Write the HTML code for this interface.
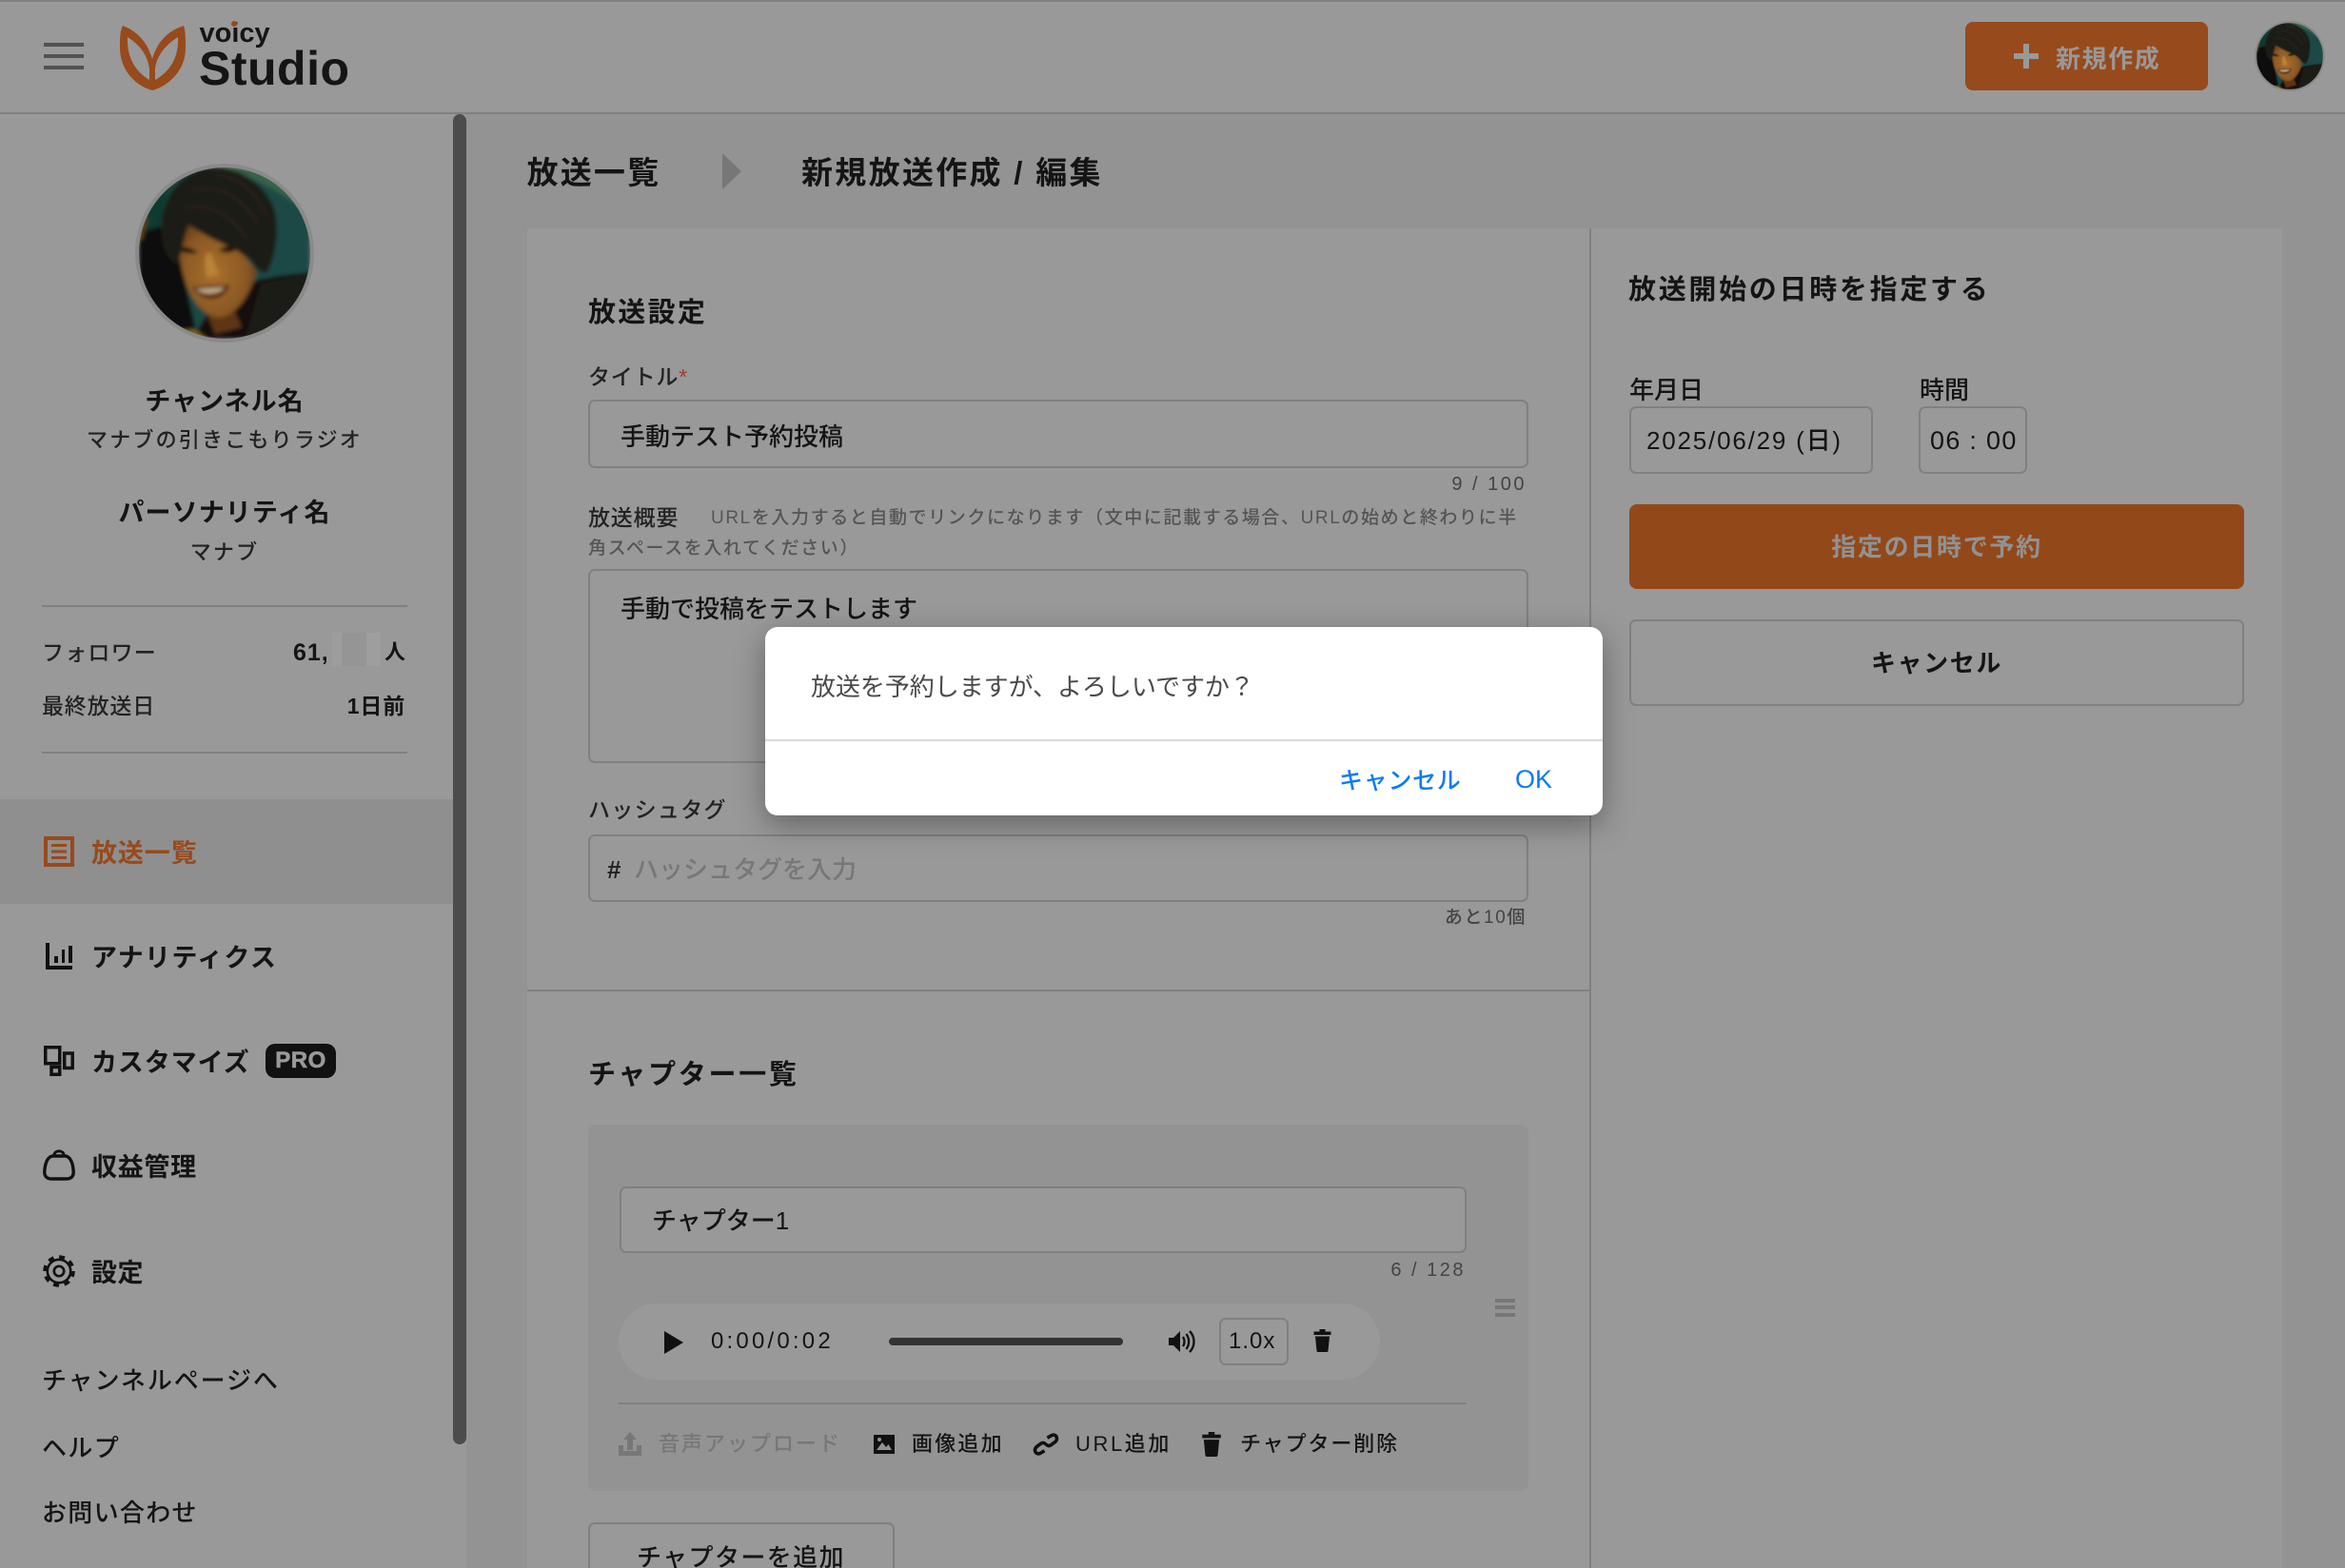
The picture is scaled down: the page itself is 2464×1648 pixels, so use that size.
<!DOCTYPE html>
<html lang="ja"><head><meta charset="utf-8"><title>voicy Studio</title>
<style>
html,body{margin:0;padding:0;width:2464px;height:1648px;overflow:hidden}
#p{position:relative;width:2464px;height:1648px;overflow:hidden;background:#939393;color:#141414;font-family:"Liberation Sans","Noto Sans CJK JP",sans-serif}
.a{position:absolute}
.t{position:absolute;white-space:nowrap;line-height:40px;height:40px;margin-top:3.500px;font-weight:500}
.b{font-weight:700}
.r{text-align:right}
.c{text-align:center}
.box{position:absolute;box-sizing:border-box;border:2px solid #808080;border-radius:7px;background:#999}
svg{position:absolute;overflow:visible}
</style></head><body><div id="p">
<svg width="0" height="0" style="position:absolute"><defs>
<filter id="bl" x="-10%" y="-10%" width="120%" height="120%"><feGaussianBlur stdDeviation="2.200"/></filter>
<radialGradient id="sk" cx="0.45" cy="0.55" r="0.6"><stop offset="0" stop-color="#a8702c"/><stop offset="0.7" stop-color="#8a5824"/><stop offset="1" stop-color="#5e3a16"/></radialGradient>
<clipPath id="cp"><circle cx="90" cy="90" r="90"/></clipPath>
<symbol id="av" viewBox="0 0 180 180"><g clip-path="url(#cp)"><g filter="url(#bl)">
<rect width="180" height="180" fill="#1a4a44"/>
<path d="M70 0H180V48L140 22L110 8Z" fill="#38634a"/>
<path d="M0 0H40L26 40L22 66H0Z" fill="#103a33"/>
<path d="M0 68L24 62L44 100L62 180H0Z" fill="#0b0b08"/>
<path d="M0 50L9 52L4 76H0Z" fill="#5f3c18"/>
<path d="M56 180L74 150L125 118L146 114L180 110V180Z" fill="#12110d"/>
<path d="M128 122L178 112V150L140 180H112Z" fill="#1b1a14"/>
<path d="M40 172L58 170L72 180H46Z" fill="#7d6322"/>
<path d="M70 150C78 158 92 160 100 150L108 168L80 175Z" fill="#5f3615"/>
<path d="M42 78C42 110 55 155 85 158C105 155 118 130 124 110L100 78L52 55Z" fill="url(#sk)"/>
<path d="M69 97C72 86 77 88 79 100L84 113L71 115Z" fill="#b98437"/>
<path d="M56 126C66 125 84 122 95 124C90 140 68 144 56 126Z" fill="#54200f"/>
<path d="M60 128C68 127 82 126 90 126C85 134 68 135 60 128Z" fill="#bda985"/>
<path d="M41 86C46 82 56 84 62 90C54 91 46 90 41 86ZM84 87C90 82 98 82 104 85C98 90 90 91 84 87Z" fill="#150e08"/>
<path d="M24 74C20 40 36 6 74 0C100 -2 128 12 141 40C148 58 146 88 135 110C128 112 122 105 118 98C106 90 100 84 92 82C78 76 64 68 52 60C49 68 45 88 41 102C32 98 26 88 24 74Z" fill="#1f1a15"/>
<path d="M55 25C80 15 108 30 124 58M46 44C70 35 98 50 114 76M80 8C102 8 122 24 134 50" fill="none" stroke="#2b241c" stroke-width="3"/>
</g></g></symbol>
<symbol id="trash" viewBox="0 0 20 24"><path d="M7 0H13V2.500H19V6H1V2.500H7Z M2.500 7.500H17.500L16 23A1.500 1.500 0 0 1 14.500 24H5.500A1.500 1.500 0 0 1 4 23Z" fill="#111"/></symbol>
</defs></svg>

<!-- header -->
<div class="a" style="left:0;top:0;width:2464px;height:120px;background:#999"></div>
<div class="a" style="left:0;top:0;width:2464px;height:2px;background:#808080"></div>
<div class="a" style="left:0;top:118px;width:2464px;height:2px;background:#808080"></div>
<div class="a" style="left:46px;top:45px;width:42px;height:4px;background:#525252"></div>
<div class="a" style="left:46px;top:57px;width:42px;height:4px;background:#525252"></div>
<div class="a" style="left:46px;top:69px;width:42px;height:4px;background:#525252"></div>
<svg style="left:0;top:0" width="400" height="118">
<path fill="#974a1c" fill-rule="evenodd" d="M160 95C145 91 126 76 126 50C126 40 126 33 129 27C145 33 155 45 160 62C165 45 175 33 193 27C195 33 195 40 195 50C195 76 175 91 160 95ZM134 39C133 60 142 75 157 84V72C155 58 147 47 134 39ZM187 39C188 60 179 75 163 84V72C165 58 174 47 187 39Z"/>
<text x="209.500" y="44" font-family="Liberation Sans" font-weight="700" font-size="29" fill="#151515">voicy</text>
<text x="209" y="89" font-family="Liberation Sans" font-weight="700" font-size="50" letter-spacing="0.500" fill="#151515">Studio</text>
<circle cx="246" cy="25" r="3" fill="#974a1c"/>
</svg>
<div class="a" style="left:2065px;top:23px;width:255px;height:72px;background:#974a1c;border-radius:8px"></div>
<div class="a" style="left:2116px;top:56px;width:26px;height:6px;background:#999"></div>
<div class="a" style="left:2126px;top:46px;width:6px;height:26px;background:#999"></div>
<div class="t b" style="left:2160px;top:38px;font-size:26px;letter-spacing:1.600px;color:#999">新規作成</div>
<div class="a" style="left:2369px;top:22px;width:74px;height:74px;border-radius:50%;background:#8a8a8a"></div>
<svg style="left:2371px;top:24px" width="70" height="70"><use href="#av" width="70" height="70"/></svg>

<!-- sidebar -->
<div class="a" style="left:0;top:120px;width:490px;height:1528px;background:#999"></div>
<div class="a" style="left:476px;top:120px;width:14px;height:1398px;background:#4c4c4c;border-radius:7px"></div>
<div class="a" style="left:142px;top:172px;width:188px;height:188px;border-radius:50%;background:#8a8a8a"></div>
<svg style="left:146px;top:176px" width="180" height="180"><use href="#av" width="180" height="180"/></svg>
<div class="t b c" style="left:0;width:472px;top:398px;font-size:27px;letter-spacing:1px">チャンネル名</div>
<div class="t c" style="left:0;width:472px;top:439px;font-size:22px;letter-spacing:2.200px;color:#222">マナブの引きこもりラジオ</div>
<div class="t b c" style="left:0;width:472px;top:515px;font-size:27px;letter-spacing:1.100px">パーソナリティ名</div>
<div class="t c" style="left:0;width:472px;top:557px;font-size:22px;letter-spacing:2.200px;color:#222">マナブ</div>
<div class="a" style="left:44px;top:636px;width:384px;height:2px;background:#808080"></div>
<div class="t" style="left:44px;top:662.500px;font-size:23px;letter-spacing:1.200px;color:#222">フォロワー</div>
<div class="t b" style="left:308px;top:662.500px;font-size:25px;letter-spacing:1px">61,</div>
<div class="a" style="left:349px;top:665px;width:10px;height:35px;background:#9d9d9d"></div>
<div class="a" style="left:359px;top:665px;width:26px;height:35px;background:#959595"></div>
<div class="a" style="left:385px;top:665px;width:15px;height:35px;background:#9e9e9e"></div>
<div class="t b" style="left:404px;top:662.500px;font-size:22px">人</div>
<div class="t" style="left:44px;top:718.500px;font-size:23px;letter-spacing:.8px;color:#222">最終放送日</div>
<div class="t b r" style="left:226px;width:200px;top:718.500px;font-size:23px;letter-spacing:.8px">1日前</div>
<div class="a" style="left:44px;top:790px;width:384px;height:2px;background:#808080"></div>

<div class="a" style="left:0;top:840px;width:476px;height:110px;background:#8f8f8f"></div>
<svg style="left:46px;top:879px" width="32" height="32" viewBox="0 0 32 32"><rect x="2" y="2" width="28" height="28" fill="none" stroke="#974a1c" stroke-width="4"/><path d="M8 9.500H24M8 16H24M8 22.500H24" stroke="#974a1c" stroke-width="3"/></svg>
<div class="t b" style="left:96px;top:873px;font-size:27px;letter-spacing:.9px;color:#974a1c">放送一覧</div>
<svg style="left:48px;top:991px" width="28" height="28" viewBox="0 0 28 28"><path d="M0 0H4V24H28V28H0Z M9 14H13V21H9Z M17 7H20V21H17Z M24 3H28V21H24Z" fill="#111"/></svg>
<div class="t b" style="left:96px;top:983px;font-size:27px;letter-spacing:1.300px">アナリティクス</div>
<svg style="left:46px;top:1099px" width="32" height="32" viewBox="0 0 32 32"><g fill="none" stroke="#111" stroke-width="3.500"><rect x="1.750" y="1.750" width="15" height="17"/><rect x="8" y="22.500" width="8.750" height="7.750"/><rect x="21.700" y="8" width="8.500" height="15.500"/></g></svg>
<div class="t b" style="left:96px;top:1093px;font-size:27px;letter-spacing:.9px">カスタマイズ</div>
<div class="a" style="left:279px;top:1097px;width:74px;height:36px;border-radius:10px;background:#111;color:#999;font-weight:700;font-size:24px;line-height:36px;text-align:center;letter-spacing:.5px;-webkit-text-stroke:.6px #999;font-family:'Liberation Sans',sans-serif">PRO</div>
<svg style="left:45px;top:1208px" width="34" height="33" viewBox="0 0 34 33"><path d="M10 7C5 8 2.500 14 1.800 23C1.500 28 4 31 9 31H25C30 31 32.500 28 32.200 23C31.500 14 29 8 24 7Z" fill="none" stroke="#111" stroke-width="3.400"/><path d="M12 6C12 .5 22 .5 22 6" fill="none" stroke="#111" stroke-width="3"/></svg>
<div class="t b" style="left:96px;top:1203px;font-size:27px;letter-spacing:.7px">収益管理</div>
<svg style="left:45px;top:1319px" width="34" height="34" viewBox="0 0 34 34"><g fill="none" stroke="#111"><circle cx="17" cy="17" r="15" stroke-width="3.600" stroke-dasharray="6 5.780"/><circle cx="17" cy="17" r="12.200" stroke-width="2.600"/><circle cx="17" cy="17" r="5.200" stroke-width="2.700"/></g></svg>
<div class="t b" style="left:96px;top:1314px;font-size:27px;letter-spacing:.5px">設定</div>
<div class="t" style="left:44px;top:1427px;font-size:26px;letter-spacing:1.900px">チャンネルページへ</div>
<div class="t" style="left:44px;top:1498px;font-size:26px;letter-spacing:1.400px">ヘルプ</div>
<div class="t" style="left:44px;top:1566.500px;font-size:26px;letter-spacing:1.300px">お問い合わせ</div>

<!-- breadcrumb -->
<div class="t b" style="left:553.500px;top:158px;font-size:33px;letter-spacing:2.200px">放送一覧</div>
<svg style="left:759px;top:161px" width="20" height="38"><path d="M0 0L20 19L0 38Z" fill="#777"/></svg>
<div class="t b" style="left:842px;top:158px;font-size:33px;letter-spacing:2.300px">新規放送作成 / 編集</div>

<!-- left panel -->
<div class="a" style="left:554px;top:240px;width:1116px;height:1408px;background:#999"></div>
<div class="a" style="left:1670px;top:240px;width:2px;height:1408px;background:#808080"></div>
<div class="t b" style="left:618px;top:305px;font-size:29px;letter-spacing:2.300px">放送設定</div>
<div class="t" style="left:618px;top:372.500px;font-size:23px;letter-spacing:.8px;color:#222">タイトル<span style="color:#a63a32">*</span></div>
<div class="box" style="left:618px;top:420px;width:988px;height:72px"></div>
<div class="t" style="left:652px;top:435px;font-size:26px">手動テスト予約投稿</div>
<div class="t r" style="left:1404px;width:200px;top:485px;font-size:20px;letter-spacing:2.500px;color:#444">9 / 100</div>
<div class="t" style="left:618px;top:520px;font-size:23px;letter-spacing:.8px;color:#222">放送概要</div>
<div class="t" style="left:747px;top:521px;font-size:19px;letter-spacing:1.600px;color:#555">URLを入力すると自動でリンクになります（文中に記載する場合、URLの始めと終わりに半</div>
<div class="t" style="left:618px;top:553px;font-size:19px;letter-spacing:1.600px;color:#555">角スペースを入れてください）</div>
<div class="box" style="left:618px;top:598px;width:988px;height:204px"></div>
<div class="t" style="left:652px;top:616px;font-size:26px">手動で投稿をテストします</div>
<div class="t" style="left:618px;top:827.500px;font-size:23px;letter-spacing:1.300px;color:#222">ハッシュタグ</div>
<div class="box" style="left:618px;top:877px;width:988px;height:71px"></div>
<div class="t b" style="left:638px;top:890px;font-size:26px;color:#222">#</div>
<div class="t" style="left:666px;top:890px;font-size:26px;color:#777">ハッシュタグを入力</div>
<div class="t r" style="left:1404px;width:200px;top:941px;font-size:19px;color:#444;letter-spacing:1.600px">あと10個</div>
<div class="a" style="left:554px;top:1040px;width:1116px;height:2px;background:#808080"></div>
<div class="t b" style="left:618px;top:1106px;font-size:29px;letter-spacing:2.700px">チャプター一覧</div>

<!-- chapter -->
<div class="a" style="left:618px;top:1182px;width:988px;height:385px;background:#939393;border-radius:8px"></div>
<div class="box" style="left:651px;top:1247px;width:890px;height:70px"></div>
<div class="t" style="left:685px;top:1259.500px;font-size:26px">チャプター1</div>
<div class="t r" style="left:1340px;width:200px;top:1311px;font-size:20px;letter-spacing:2.500px;color:#444">6 / 128</div>
<div class="a" style="left:1571px;top:1365px;width:21px;height:3.500px;background:#777"></div>
<div class="a" style="left:1571px;top:1372px;width:21px;height:3.500px;background:#777"></div>
<div class="a" style="left:1571px;top:1380px;width:21px;height:3.500px;background:#777"></div>
<div class="a" style="left:650px;top:1370px;width:800px;height:80px;border-radius:40px;background:#999"></div>
<svg style="left:698px;top:1399px" width="20" height="24"><path d="M0 0L20 12L0 24Z" fill="#111"/></svg>
<div class="t" style="left:747px;top:1386.500px;font-size:24px;letter-spacing:3.200px">0:00/0:02</div>
<div class="a" style="left:934px;top:1406px;width:246px;height:8px;border-radius:4px;background:#333"></div>
<svg style="left:1228px;top:1398px" width="30" height="24" viewBox="0 0 30 24"><path d="M0 8H5L12 1V23L5 16H0Z" fill="#111"/><path d="M15 7C17 10 17 14 15 17M18.500 4C22 9 22 15 18.500 20M22 1C28 7 28 17 22 23" fill="none" stroke="#111" stroke-width="2.300"/></svg>
<div class="box" style="left:1281px;top:1385px;width:73px;height:50px;background:none"></div>
<div class="t" style="left:1291px;top:1386.500px;font-size:24px;letter-spacing:1px">1.0x</div>
<svg style="left:1379px;top:1397px" width="21" height="24"><use href="#trash" width="21" height="24"/></svg>
<div class="a" style="left:650px;top:1474px;width:891px;height:2px;background:#808080"></div>
<svg style="left:650px;top:1505px" width="24" height="25" viewBox="0 0 24 25"><path d="M12 0L19 8H15V19H9V8H5Z M0 14H5V20H19V14H24V25H0Z" fill="#777"/></svg>
<div class="t" style="left:692px;top:1494.500px;font-size:22px;letter-spacing:2px;color:#777">音声アップロード</div>
<svg style="left:917px;top:1507px" width="24" height="22" viewBox="0 0 24 22"><path d="M1 1H23V21H1Z" fill="#111"/><path d="M4 17L10 9L14 14L16.500 11L20 17Z" fill="#939393"/><circle cx="7" cy="6" r="2" fill="#939393"/></svg>
<div class="t" style="left:958px;top:1494.500px;font-size:22px;letter-spacing:2.200px">画像追加</div>
<svg style="left:1087px;top:1505px" width="24" height="26" viewBox="0 0 24 26"><g fill="none" stroke="#111" stroke-width="3.600" transform="rotate(12 12 13)"><path d="M12 6L16 2.500C18 1 20.500 1.500 21.500 3.500C22.500 5 22 7 21 8.500L17 13C15.500 14.500 13 14 12 12.500"/><path d="M12 20L8 23.500C6 25 3.500 24.500 2.500 22.500C1.500 21 2 19 3 17.500L7 13C8.500 11.500 11 12 12 13.500"/></g></svg>
<div class="t" style="left:1130px;top:1494.500px;font-size:22px;letter-spacing:2.600px">URL追加</div>
<svg style="left:1262px;top:1505px" width="22" height="26"><use href="#trash" width="22" height="26"/></svg>
<div class="t" style="left:1303px;top:1494.500px;font-size:22px;letter-spacing:1.900px">チャプター削除</div>
<div class="box" style="left:618px;top:1600px;width:322px;height:80px;background:none"></div>
<div class="t" style="left:669px;top:1613.500px;font-size:26px;letter-spacing:1.400px">チャプターを追加</div>

<!-- right panel -->
<div class="a" style="left:1672px;top:240px;width:726px;height:1408px;background:#999"></div>
<div class="t b" style="left:1711px;top:281.500px;font-size:29px;letter-spacing:2.700px">放送開始の日時を指定する</div>
<div class="t" style="left:1712px;top:386px;font-size:26px">年月日</div>
<div class="t" style="left:2017px;top:386px;font-size:26px">時間</div>
<div class="box" style="left:1712px;top:427px;width:256px;height:71px"></div>
<div class="t" style="left:1730px;top:439.500px;font-size:26px;letter-spacing:1.800px">2025/06/29 (日)</div>
<div class="box" style="left:2016px;top:427px;width:114px;height:71px"></div>
<div class="t" style="left:2028px;top:439.500px;font-size:27px;letter-spacing:1.300px">06 : 00</div>
<div class="a" style="left:1712px;top:530px;width:646px;height:89px;background:#934819;border-radius:8px"></div>
<div class="t b c" style="left:1712px;width:646px;top:551.500px;font-size:26px;letter-spacing:1.700px;color:#929292">指定の日時で予約</div>
<div class="box" style="left:1712px;top:651px;width:646px;height:91px"></div>
<div class="t b c" style="left:1712px;width:646px;top:673.500px;font-size:26px;letter-spacing:1.600px">キャンセル</div>

<!-- dialog -->
<div class="a" style="left:804px;top:659px;width:880px;height:198px;background:#fff;border-radius:13px;box-shadow:0 10px 32px rgba(0,0,0,.35)"></div>
<div class="a" style="left:804px;top:777px;width:880px;height:2px;background:#d8d8d8"></div>
<div class="t" style="left:852px;top:698px;font-size:26px;letter-spacing:-.05px;color:#4a4a4a;font-weight:400">放送を予約しますが、よろしいですか？</div>
<div class="t" style="left:1407px;top:797px;font-size:25px;letter-spacing:.7px;color:#0a7bf5">キャンセル</div>
<div class="t" style="left:1592px;top:795.500px;font-size:27px;color:#0a7bf5">OK</div>
</div></body></html>
